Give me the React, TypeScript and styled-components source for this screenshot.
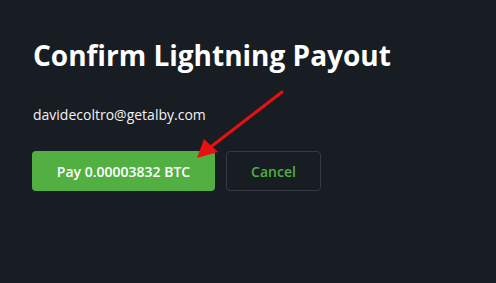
import React from "react";
import styled, { createGlobalStyle } from "styled-components";

const Global = createGlobalStyle`
  html, body { margin: 0; padding: 0; background: #181c23; }
  body { font-family: "Open Sans", "Noto Sans", sans-serif; }
`;

const Page = styled.div`
  position: relative;
  width: 496px;
  height: 283px;
  box-sizing: border-box;
  padding: 36px 32px 0 33px;
  background: #181c23;
  overflow: hidden;
`;

const Title = styled.h1`
  margin: 0;
  font-size: 28px;
  line-height: 38px;
  font-weight: 700;
  color: #ffffff;
`;

const Email = styled.p`
  margin: 31px 0 0;
  font-size: 14px;
  line-height: 20px;
  color: #f2f3f5;
`;

const Actions = styled.div`
  display: flex;
  gap: 11px;
  margin-top: 26px;
  margin-left: -1px;
`;

const Button = styled.button<{ $primary?: boolean }>`
  height: 40px;
  box-sizing: border-box;
  border-radius: 4px;
  font-family: "Open Sans", "Noto Sans", sans-serif;
  font-size: 14px;
  font-weight: 600;
  cursor: pointer;
  padding: 0;
  width: ${(p) => (p.$primary ? "183px" : "95px")};
  background: ${(p) => (p.$primary ? "#52b043" : "transparent")};
  color: ${(p) => (p.$primary ? "#ffffff" : "#52b043")};
  border: ${(p) => (p.$primary ? "none" : "1px solid #353a43")};
`;

const Arrow = styled.svg`
  position: absolute;
  left: 0;
  top: 0;
  pointer-events: none;
`;

export default function App() {
  return (
    <Page>
      <Global />
      <Title>Confirm Lightning Payout</Title>
      <Email>davidecoltro@getalby.com</Email>
      <Actions>
        <Button $primary>Pay 0.00003832 BTC</Button>
        <Button>Cancel</Button>
      </Actions>
      <Arrow width="496" height="283" viewBox="0 0 496 283">
        <line x1="282" y1="92" x2="208" y2="149" stroke="#e81010" strokeWidth="3" strokeLinecap="round" />
        <polygon points="197,158 204,139 218,152" fill="#e81010" />
      </Arrow>
    </Page>
  );
}
